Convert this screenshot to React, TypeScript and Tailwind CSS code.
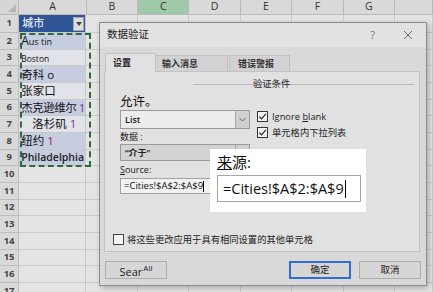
import React from "react";

const CJK = "font-['Open_Sans','Noto_Sans_CJK_SC',sans-serif]";

const colWidths = ["w-[54px]", "w-[53px]", "w-[54px]", "w-[53px]", "w-[54px]", "w-[53px]", "w-[40px]"];
const colLetters = ["B", "C", "D", "E", "F", "G", ""];

function CityCell({ row }: { row: number }) {
  if (row === 1)
    return (
      <div className="flex items-center h-full bg-[#2f5597] pl-[3px] pr-[1px]">
        <span className="text-[11px] text-white">城市</span>
        <span className="ml-auto w-[11px] h-[14px] bg-[#dedede] border border-[#a8a8a8] flex items-center justify-center">
          <svg width="6" height="4" viewBox="0 0 6 4">
            <path d="M0 0h6L3 4z" fill="#444" />
          </svg>
        </span>
      </div>
    );
  const band = row === 3 || row === 5 || row === 7 ? "bg-[#e2e3e8]" : "bg-[#c7cde0]";
  const text: Record<number, React.ReactNode> = {
    2: (
      <span className="text-[9px]">
        <span className="text-[12px]">A</span>us tin
      </span>
    ),
    3: <span className="text-[8.5px] mt-[3px]">Boston</span>,
    4: <span className="text-[11.5px]">奇科 o</span>,
    5: <span className="text-[11.5px]">张家口</span>,
    6: (
      <span className="text-[11.5px] tracking-[-0.5px]">
        杰克逊维尔 <span className="text-[#7030a0]">1</span>
      </span>
    ),
    7: (
      <span className="text-[11.5px] pl-[11px]">
        洛杉矶 <span className="text-[#7030a0]">1</span>
      </span>
    ),
    8: (
      <span className="text-[11.5px]">
        纽约 <span className="text-[#9b1d4b]">1</span>
      </span>
    ),
    9: <span className="text-[10.5px] font-semibold text-[#222]">Philadelphia</span>,
  };
  if (row <= 9)
    return <div className={`flex items-center h-full pl-[2px] text-[#111] ${band}`}>{text[row]}</div>;
  return null;
}

function Sheet() {
  const rows = Array.from({ length: 17 }, (_, i) => i + 1);
  return (
    <div className="flex flex-col">
      <div className="flex h-[15px]">
        <div className="w-[20px] bg-[#d6d6d6] border-r border-b border-[#b9b9b9] flex items-end justify-end p-[2px]">
          <svg width="8" height="8" viewBox="0 0 8 8">
            <path d="M8 0v8H0z" fill="#b5b5b5" />
          </svg>
        </div>
        <div className="w-[70px] bg-[#d9d9d9] border-r border-b border-[#b9b9b9] flex items-center justify-center text-[10.5px] text-[#333]">
          A
        </div>
        {colLetters.map((c, i) => (
          <div
            key={i}
            className={`${colWidths[i]} ${c === "C" ? "bg-[#9fc9a9]" : "bg-[#d9d9d9]"} border-r border-b border-[#b9b9b9] flex items-center justify-center text-[10.5px] text-[#333]`}
          >
            {c}
          </div>
        ))}
      </div>
      {rows.map((r) => (
        <div key={r} className={`flex ${r === 1 ? "h-[18px]" : "h-[16.67px]"}`}>
          <div className="w-[20px] bg-[#d9d9d9] border-r border-b border-[#bdbdbd] flex items-center justify-center text-[9.5px] font-bold text-[#444]">
            {r}
          </div>
          <div className="w-[70px] border-r border-b border-[#c9c9c9] bg-[#e4e4e4] overflow-hidden whitespace-nowrap">
            <CityCell row={r} />
          </div>
          {colWidths.map((w, i) => (
            <div key={i} className={`${w} border-r border-b border-[#cbcbcb] bg-[#e4e4e4]`} />
          ))}
        </div>
      ))}
    </div>
  );
}

function Check() {
  return (
    <svg width="11" height="11" viewBox="0 0 11 11" className="shrink-0">
      <rect x="0.5" y="0.5" width="10" height="10" fill="#f4f4f4" stroke="#333" />
      <path d="M2.3 5.6l2.2 2.3 4.3-5" fill="none" stroke="#222" strokeWidth="1.2" />
    </svg>
  );
}

function SelectBox({ value, disabled }: { value: string; disabled?: boolean }) {
  return (
    <div
      className={`flex items-center w-[130px] border border-[#9a9a9a] ${disabled ? "h-[17px] bg-[#d3d3d3]" : "h-[19px] bg-[#ececec]"}`}
    >
      <span className="pl-[4px] text-[9px] font-semibold text-[#222]">{value}</span>
      <span className="ml-auto w-[14px] h-full bg-[#d0d0d0] border-l border-[#a8a8a8] flex items-center justify-center">
        <svg width="7" height="5" viewBox="0 0 7 5">
          <path d="M0.5 1l3 3 3-3" fill="none" stroke="#666" />
        </svg>
      </span>
    </div>
  );
}

function Dialog() {
  return (
    <div
      className={`absolute left-[99px] top-[22px] w-[328px] h-[264px] bg-[#d9d9d9] border border-[#8c8c8c] shadow-[2px_2px_6px_rgba(0,0,0,0.25)] flex flex-col ${CJK}`}
    >
      <div className="h-[24px] bg-[#e2e2e2] flex items-center pl-[7px] pr-[13px]">
        <span className="text-[10.5px] text-[#222]">数据验证</span>
        <span className="ml-auto text-[11px] text-[#777]">?</span>
        <svg width="10" height="10" viewBox="0 0 10 10" className="ml-[28px]">
          <path d="M1 1l8 8M9 1l-8 8" stroke="#666" strokeWidth="1" />
        </svg>
      </div>

      {/* tabs */}
      <div className="mt-[6px] ml-[5px] flex items-end h-[18px]">
        <div className="relative z-10 w-[51px] h-[19px] -mb-px bg-[#e1e1e1] border border-b-0 border-[#c3c3c3] flex items-center pl-[7px] text-[9px] font-semibold text-[#222]">
          设置
        </div>
        <div className="w-[72px] h-[16px] bg-[#d2d2d2] border-t border-r border-[#c3c3c3] flex items-center pl-[6px] text-[9px] font-semibold text-[#333]">
          输入消息
        </div>
        <div className="ml-[1px] w-[61px] h-[16px] bg-[#d2d2d2] border-t border-r border-l border-[#c3c3c3] flex items-center pl-[8px] text-[9px] font-semibold text-[#333]">
          错误警报
        </div>
      </div>

      {/* panel */}
      <div className="ml-[4px] w-[316px] h-[181px] bg-[#e1e1e1] border border-[#c3c3c3] flex flex-col">
        <div className="pl-[88px] pr-[5px] pt-[12px] h-[25px]">
          <div className="relative border-t border-[#b8b8b8]">
            <span className="absolute left-[60px] -top-[6px] text-[9.3px] text-[#222] leading-none">验证条件</span>
          </div>
        </div>
        <div className="flex">
          <div className="ml-[15px] w-[130px] flex flex-col">
            <div className="h-[13px] text-[12.5px] leading-[13px] text-[#111] -mt-[2px] mb-[2px]">允许。</div>
            <SelectBox value="List" />
            <div className="h-[15px] flex items-center text-[9px] text-[#222]">数据 :</div>
            <SelectBox value="“介于”" disabled />
            <div className="h-[17px] flex items-end pb-[2px] text-[9px] text-[#222]">
              <span className="underline">S</span>ource:
            </div>
            <div className="w-[130px] h-[16px] bg-[#f2f2f2] border border-[#a3a3a3] flex items-center pl-[3px] text-[9.5px] text-[#111]">
              =Cities!$A$2:$A$9<span className="w-px h-[11px] bg-black" />
            </div>
          </div>
          <div className="ml-[7px] pt-[14px] flex flex-col gap-[5px]">
            <div className="flex items-center gap-[4px] h-[11px] text-[9.3px] text-[#222]">
              <Check />
              <span>
                Ignore <span className="underline">b</span>lank
              </span>
            </div>
            <div className="flex items-center gap-[4px] h-[11px] text-[9.3px] text-[#222]">
              <Check />
              <span>单元格内下拉列表</span>
            </div>
          </div>
        </div>
        <div className="mt-[39px] ml-[8px] flex items-center gap-[3px]">
          <svg width="11" height="11" viewBox="0 0 11 11" className="shrink-0">
            <rect x="0.5" y="0.5" width="10" height="10" fill="#f4f4f4" stroke="#444" />
          </svg>
          <span className="text-[9.3px] text-[#222]">将这些更改应用于具有相同设置的其他单元格</span>
        </div>
      </div>

      {/* buttons */}
      <div className="mt-[9px] flex items-center">
        <div className="ml-[5px] w-[62px] h-[18px] bg-[#d6d6d6] border border-[#adadad] flex items-center justify-center">
          <span className="text-[11px] text-[#222] leading-none mt-[2px]">Sear</span>
          <span className="text-[8px] text-[#222] leading-none -mt-[5px] ml-[1px]">All</span>
        </div>
        <div className="ml-auto w-[62px] h-[18px] bg-[#d6d6d6] border-2 border-[#2d6fd0] flex items-center justify-center text-[9.5px] text-[#222]">
          确定
        </div>
        <div className="ml-[8px] mr-[5px] w-[62px] h-[18px] bg-[#d6d6d6] border border-[#adadad] flex items-center justify-center text-[9.5px] text-[#222]">
          取消
        </div>
      </div>
    </div>
  );
}

function Callout() {
  return (
    <div className={`absolute left-[210px] top-[149px] w-[156px] h-[63px] bg-white flex flex-col pl-[7px] pr-[5px] ${CJK}`}>
      <div className="h-[26px] flex items-center text-[15px] text-[#111]">
        <span className="underline">来</span>源:
      </div>
      <div className="w-[144px] h-[27px] border border-[#a6a6a6] flex items-center pl-[5px] text-[14.5px] text-[#111]">
        =Cities!$A$2:$A$9
        <span className="w-px h-[18px] bg-black ml-[1px]" />
      </div>
    </div>
  );
}

export default function App() {
  return (
    <div className={`relative w-[433px] h-[292px] overflow-hidden bg-[#e4e4e4] ${CJK}`}>
      <Sheet />
      {/* copy marquee around A2:A9 */}
      <div className="absolute left-[20px] top-[33px] w-[71px] h-[134px] border-2 border-dashed border-[#2b6b3f]" />
      <Dialog />
      <Callout />
    </div>
  );
}
